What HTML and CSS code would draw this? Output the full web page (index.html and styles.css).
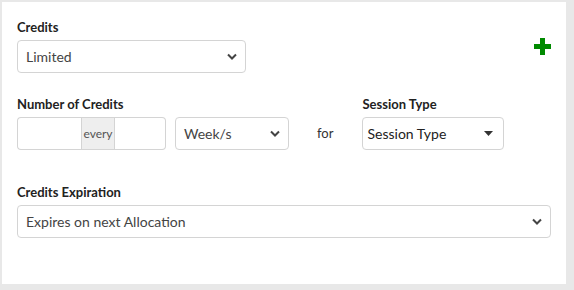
FILE: index.html
```html
<!DOCTYPE html>
<html lang="en">
  <head>
    <meta charset="UTF-8">
    <title>Credits</title>
    <link rel="stylesheet" href="styles.css">
  </head>
  <body>
    <div class="panel">
      <div class="row row-top">
        <div class="field field-credits">
          <label>Credits</label>
          <div class="select">
            <span>Limited</span>
            <svg class="chevron" width="10" height="7" viewBox="0 0 10 7"><path d="M1 1.5 L5 5.5 L9 1.5" fill="none" stroke="#444" stroke-width="2"/></svg>
          </div>
        </div>
        <div class="add-btn">
          <svg width="17" height="17" viewBox="0 0 17 17"><rect x="6" y="0" width="5" height="17" fill="#008a00"/><rect x="0" y="6" width="17" height="5" fill="#008a00"/></svg>
        </div>
      </div>

      <div class="row row-mid">
        <div class="field">
          <label>Number of Credits</label>
          <div class="input-group">
            <div class="input input-left"></div>
            <div class="addon">every</div>
            <div class="input input-right"></div>
          </div>
        </div>
        <div class="field field-period">
          <div class="select">
            <span>Week/s</span>
            <svg class="chevron" width="10" height="7" viewBox="0 0 10 7"><path d="M1 1.5 L5 5.5 L9 1.5" fill="none" stroke="#444" stroke-width="2"/></svg>
          </div>
        </div>
        <div class="for-text">for</div>
        <div class="field field-session">
          <label>Session Type</label>
          <div class="select select-dark">
            <span>Session Type</span>
            <svg width="9" height="5" viewBox="0 0 9 5"><path d="M0 0 L9 0 L4.5 5 Z" fill="#333"/></svg>
          </div>
        </div>
      </div>

      <div class="row row-bottom">
        <div class="field field-full">
          <label>Credits Expiration</label>
          <div class="select">
            <span>Expires on next Allocation</span>
            <svg class="chevron" width="10" height="7" viewBox="0 0 10 7"><path d="M1 1.5 L5 5.5 L9 1.5" fill="none" stroke="#444" stroke-width="2"/></svg>
          </div>
        </div>
      </div>
    </div>
  </body>
</html>
```

FILE: styles.css
```css
body {
  margin: 0;
  background: #e8e8e8;
  font-family: "Lato", "Liberation Sans", sans-serif;
  color: #222;
}

.panel {
  background: white;
  margin: 2px 0 0 2px;
  width: 564px;
  height: 282px;
  box-sizing: border-box;
  padding: 17px 15px 0 15px;
}

.row {
  display: flex;
}

.row-top {
  justify-content: space-between;
  align-items: flex-start;
}

.row-mid {
  margin-top: 23px;
  align-items: flex-end;
}

.row-bottom {
  margin-top: 34px;
}

label {
  display: block;
  font-size: 13px;
  font-weight: 700;
  line-height: 16px;
  margin-bottom: 5px;
  color: #222;
}

.field-credits {
  width: 229px;
}

.add-btn {
  margin-top: 19px;
  line-height: 0;
}

.select {
  height: 33px;
  box-sizing: border-box;
  border: 1px solid #d4d4d4;
  border-radius: 4px;
  display: flex;
  align-items: center;
  justify-content: space-between;
  padding: 0 8px 0 8px;
  font-size: 14px;
  color: #444;
  background: white;
}

.select-dark {
  color: #222;
  padding-left: 4px;
  padding-right: 10px;
}

.input-group {
  display: flex;
  width: 149px;
  height: 33px;
}

.input {
  border: 1px solid #d4d4d4;
  box-sizing: border-box;
  height: 33px;
}

.input-left {
  width: 64px;
  border-radius: 4px 0 0 4px;
  border-right: none;
}

.input-right {
  flex: 1;
  border-radius: 0 4px 4px 0;
  border-left: none;
}

.addon {
  width: 34px;
  background: #eeeeee;
  border: 1px solid #d4d4d4;
  box-sizing: border-box;
  font-size: 12px;
  color: #555;
  display: flex;
  align-items: center;
  justify-content: center;
}

.field-period {
  width: 114px;
  margin-left: 9px;
}

.for-text {
  font-size: 13px;
  color: #333;
  margin: 0 29px 0 28px;
  line-height: 16px;
  align-self: center;
  padding-top: 19px;
}

.field-session {
  width: 142px;
}

.field-full {
  width: 534px;
}
```
